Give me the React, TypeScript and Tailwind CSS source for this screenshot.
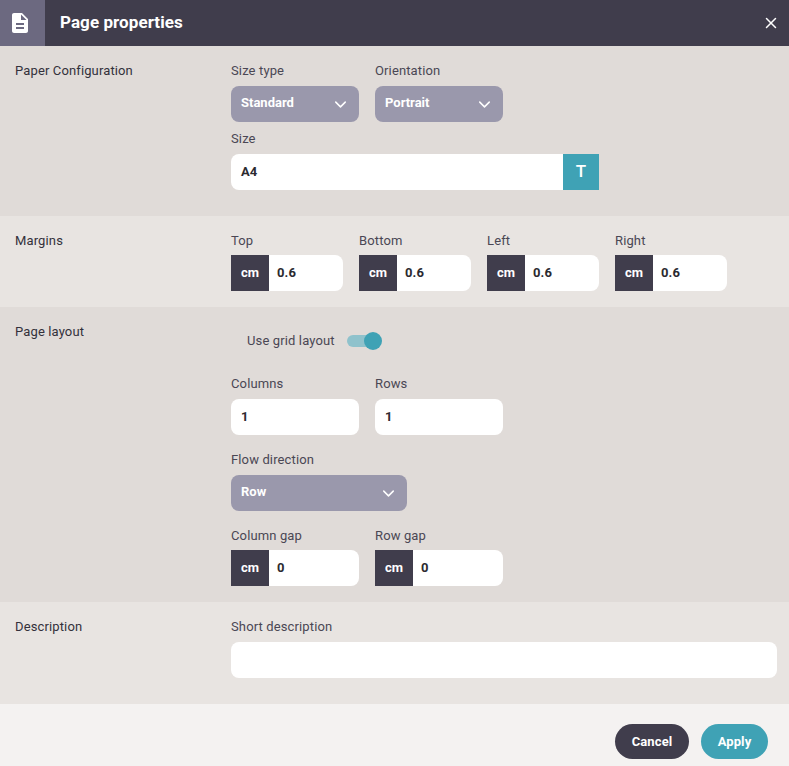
import type { ReactNode } from 'react'
import { ChevronDown, X } from 'lucide-react'

/* ---------- Form bits ---------- */

function Field({ label, className = '', children }: { label: string; className?: string; children: ReactNode }) {
  return (
    <div className={className}>
      <div className="mb-[6px] h-[18px] text-[13px] leading-[18px] tracking-[0.13px] text-[#4a4754]">{label}</div>
      {children}
    </div>
  )
}

function SelectBox({ value, className = '' }: { value: string; className?: string }) {
  return (
    <div className={`flex h-9 items-center justify-between rounded-lg bg-[#9a98ac] pl-[10px] pr-[9px] text-[13px] font-bold text-white ${className}`}>
      <span className="-mt-[2px]">{value}</span>
      <ChevronDown size={19} strokeWidth={1.9} className="mt-[1px]" />
    </div>
  )
}

function TextBox({ value, className = '' }: { value: string; className?: string }) {
  return (
    <div className={`flex h-9 items-center rounded-lg bg-white pl-[10px] text-[13px] font-bold tracking-[0.1px] text-[#2b2a30] ${className}`}>
      {value}
    </div>
  )
}

function UnitBox({ value, className = '' }: { value: string; className?: string }) {
  return (
    <div className={`flex h-9 items-center overflow-hidden rounded-r-lg bg-white text-[13px] font-bold tracking-[0.1px] ${className}`}>
      <span className="flex h-full w-[38px] items-center justify-center bg-[#403d4c] text-white">cm</span>
      <span className="pl-2 text-[#2b2a30]">{value}</span>
    </div>
  )
}

function Section({ title, tone, className = '', children }: { title: string; tone: string; className?: string; children: ReactNode }) {
  return (
    <section className={`flex ${tone} ${className}`}>
      <h2 className="w-[231px] shrink-0 pl-[15px] text-[13px] font-normal leading-[18px] tracking-[0.13px] text-[#33313b]">{title}</h2>
      <div className="min-w-0 flex-1">{children}</div>
    </section>
  )
}

export default function App() {
  return (
    <div className="flex h-[766px] w-[789px] flex-col bg-[#f4f2f1] font-['Roboto',sans-serif]">
      <header className="flex h-[46px] shrink-0 items-center bg-[#403d4c] text-white">
        <div className="flex h-full w-[45px] items-center justify-center bg-[#6c6980] pr-[5px]">
          <svg width="24" height="24" viewBox="0 0 24 24" fill="currentColor" aria-hidden>
            <path d="M14 2H6c-1.1 0-2 .9-2 2v16c0 1.1.9 2 2 2h12c1.1 0 2-.9 2-2V8l-6-6zm2 16H8v-2h8v2zm0-4H8v-2h8v2zm-3-5V3.5L18.5 9H13z" />
          </svg>
        </div>
        <h1 className="ml-[15px] flex-1 text-[17px] font-bold tracking-[0.07px]">Page properties</h1>
        <X size={18} strokeWidth={2} className="mr-[9px]" />
      </header>

      <Section title="Paper Configuration" tone="bg-[#e0dbd8]" className="h-[170px] pt-4">
        <div className="flex gap-4">
          <Field label="Size type" className="w-[128px]">
            <SelectBox value="Standard" />
          </Field>
          <Field label="Orientation" className="w-[128px]">
            <SelectBox value="Portrait" />
          </Field>
        </div>
        <Field label="Size" className="mt-2 w-[368px]">
          <div className="flex">
            <TextBox value="A4" className="flex-1 rounded-r-none" />
            <span className="flex h-9 w-9 items-center justify-center bg-[#3fa2b5] text-[17px] font-medium text-white">T</span>
          </div>
        </Field>
      </Section>

      <Section title="Margins" tone="bg-[#e8e4e1]" className="h-[91px] pt-4">
        <div className="flex gap-4 [&_div.mb-\[6px\]]:mb-[5px]">
          <Field label="Top" className="w-28"><UnitBox value="0.6" /></Field>
          <Field label="Bottom" className="w-28"><UnitBox value="0.6" /></Field>
          <Field label="Left" className="w-28"><UnitBox value="0.6" /></Field>
          <Field label="Right" className="w-28"><UnitBox value="0.6" /></Field>
        </div>
      </Section>

      <Section title="Page layout" tone="bg-[#e0dbd8]" className="h-[295px] pt-4">
        <div className="flex h-9 items-center pl-4 text-[13px] tracking-[0.13px] text-[#4a4754]">
          <span>Use grid layout</span>
          <span className="relative ml-3 h-3 w-[34px] rounded-full bg-[#8fc2cc]">
            <span className="absolute -top-[3px] left-[17px] h-[18px] w-[18px] rounded-full bg-[#3fa2b5]" />
          </span>
        </div>
        <div className="mt-4 flex gap-4">
          <Field label="Columns" className="w-[128px]"><TextBox value="1" /></Field>
          <Field label="Rows" className="w-[128px]"><TextBox value="1" /></Field>
        </div>
        <Field label="Flow direction" className="mt-4 w-[176px]">
          <SelectBox value="Row" />
        </Field>
        <div className="mt-4 flex gap-4 [&_div.mb-\[6px\]]:mb-[5px]">
          <Field label="Column gap" className="w-[128px]"><UnitBox value="0" /></Field>
          <Field label="Row gap" className="w-[128px]"><UnitBox value="0" /></Field>
        </div>
      </Section>

      <Section title="Description" tone="bg-[#e8e4e1]" className="h-[102px] pt-4">
        <Field label="Short description" className="mr-3">
          <TextBox value="" />
        </Field>
      </Section>

      <footer className="flex flex-1 items-start justify-end gap-3 pr-[21px] pt-5 text-[13px] font-bold tracking-[0.1px] text-white">
        <button className="h-[35px] w-[74px] rounded-full bg-[#403d4c]">Cancel</button>
        <button className="h-[35px] w-[67px] rounded-full bg-[#3fa2b5]">Apply</button>
      </footer>
    </div>
  )
}
